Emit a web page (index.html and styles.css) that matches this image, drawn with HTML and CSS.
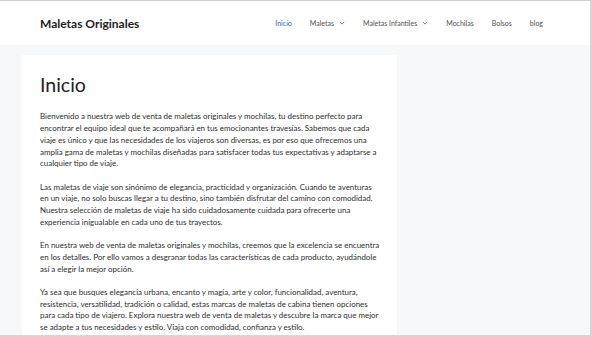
FILE: index.html
```html
<!DOCTYPE html>
<html lang="es">

<head>
    <meta charset="UTF-8">
    <meta name="viewport" content="width=device-width, initial-scale=1.0">
    <title>Maletas Originales</title>
    <link rel="stylesheet" href="styles.css">
</head>

<body>
    <div class="frame">
        <header class="site-header">
            <div class="site-title">Maletas Originales</div>
            <nav class="main-nav">
                <a href="#" class="current">Inicio</a>
                <a href="#">Maletas
                    <svg class="caret" viewBox="0 0 8 5" width="6" height="4"><path d="M1 1l3 3 3-3" /></svg>
                </a>
                <a href="#">Maletas Infantiles
                    <svg class="caret" viewBox="0 0 8 5" width="6" height="4"><path d="M1 1l3 3 3-3" /></svg>
                </a>
                <a href="#">Mochilas</a>
                <a href="#">Bolsos</a>
                <a href="#">blog</a>
            </nav>
        </header>

        <main class="site-content">
            <article class="page-card">
                <h1 class="entry-title">Inicio</h1>
                <div class="entry-content">
                    <p>Bienvenido a nuestra web de venta de maletas originales y mochilas, tu destino perfecto para
                        encontrar el equipo ideal que te acompañará en tus emocionantes travesías. Sabemos que cada
                        viaje es único y que las necesidades de los viajeros son diversas, es por eso que ofrecemos una
                        amplia gama de maletas y mochilas diseñadas para satisfacer todas tus expectativas y adaptarse a
                        cualquier tipo de viaje.</p>
                    <p>Las maletas de viaje son sinónimo de elegancia, practicidad y organización. Cuando te aventuras
                        en un viaje, no solo buscas llegar a tu destino, sino también disfrutar del camino con comodidad.
                        Nuestra selección de maletas de viaje ha sido cuidadosamente cuidada para ofrecerte una
                        experiencia inigualable en cada uno de tus trayectos.</p>
                    <p>En nuestra web de venta de maletas originales y mochilas, creemos que la excelencia se encuentra
                        en los detalles. Por ello vamos a desgranar todas las características de cada producto, ayudándole
                        así a elegir la mejor opción.</p>
                    <p>Ya sea que busques elegancia urbana, encanto y magia, arte y color, funcionalidad, aventura,
                        resistencia, versatilidad, tradición o calidad, estas marcas de maletas de cabina tienen opciones
                        para cada tipo de viajero. Explora nuestra web de venta de maletas y descubre la marca que mejor
                        se adapte a tus necesidades y estilo. Viaja con comodidad, confianza y estilo.</p>
                </div>
            </article>
        </main>
    </div>
</body>

</html>
```

FILE: styles.css
```css
* {
    margin: 0;
    padding: 0;
    box-sizing: border-box;
}

html,
body {
    height: 100%;
}

body {
    font-family: Lato, "Open Sans", sans-serif;
    color: #2e2e2e;
    background: #fff;
}

.frame {
    height: 100vh;
    overflow: hidden;
    border-top: 1px solid #cfcfcf;
    border-right: 2px solid #d6d6d6;
    border-bottom: 2px solid #d6d6d6;
    background: #f7f8f9;
}

.site-header {
    height: 44px;
    background: #fff;
    display: flex;
    justify-content: space-between;
    align-items: center;
    padding: 0 38px 0 40px;
}

.site-title {
    font-size: 12px;
    font-weight: 700;
    color: #222;
}

.main-nav {
    display: flex;
    align-items: center;
}

.main-nav a {
    display: flex;
    align-items: center;
    padding: 0 9px;
    font-size: 7px;
    color: #515151;
    text-decoration: none;
}

.main-nav a.current {
    color: #1e73be;
}

.caret {
    margin-left: 5px;
    fill: none;
    stroke: #666;
    stroke-width: 1.2;
}

.site-content {
    padding: 10px 22px 0;
}

.page-card {
    width: 375px;
    background: #fff;
    padding: 18px 17.5px 18px 18px;
}

.entry-title {
    font-size: 19.5px;
    font-weight: 400;
    line-height: 1.2;
    color: #222;
    margin-bottom: 9px;
}

.entry-content {
    margin-top: 15px;
}

.entry-content p {
    font-size: 7.95px;
    line-height: 11.7px;
    margin-bottom: 11.7px;
}
```
